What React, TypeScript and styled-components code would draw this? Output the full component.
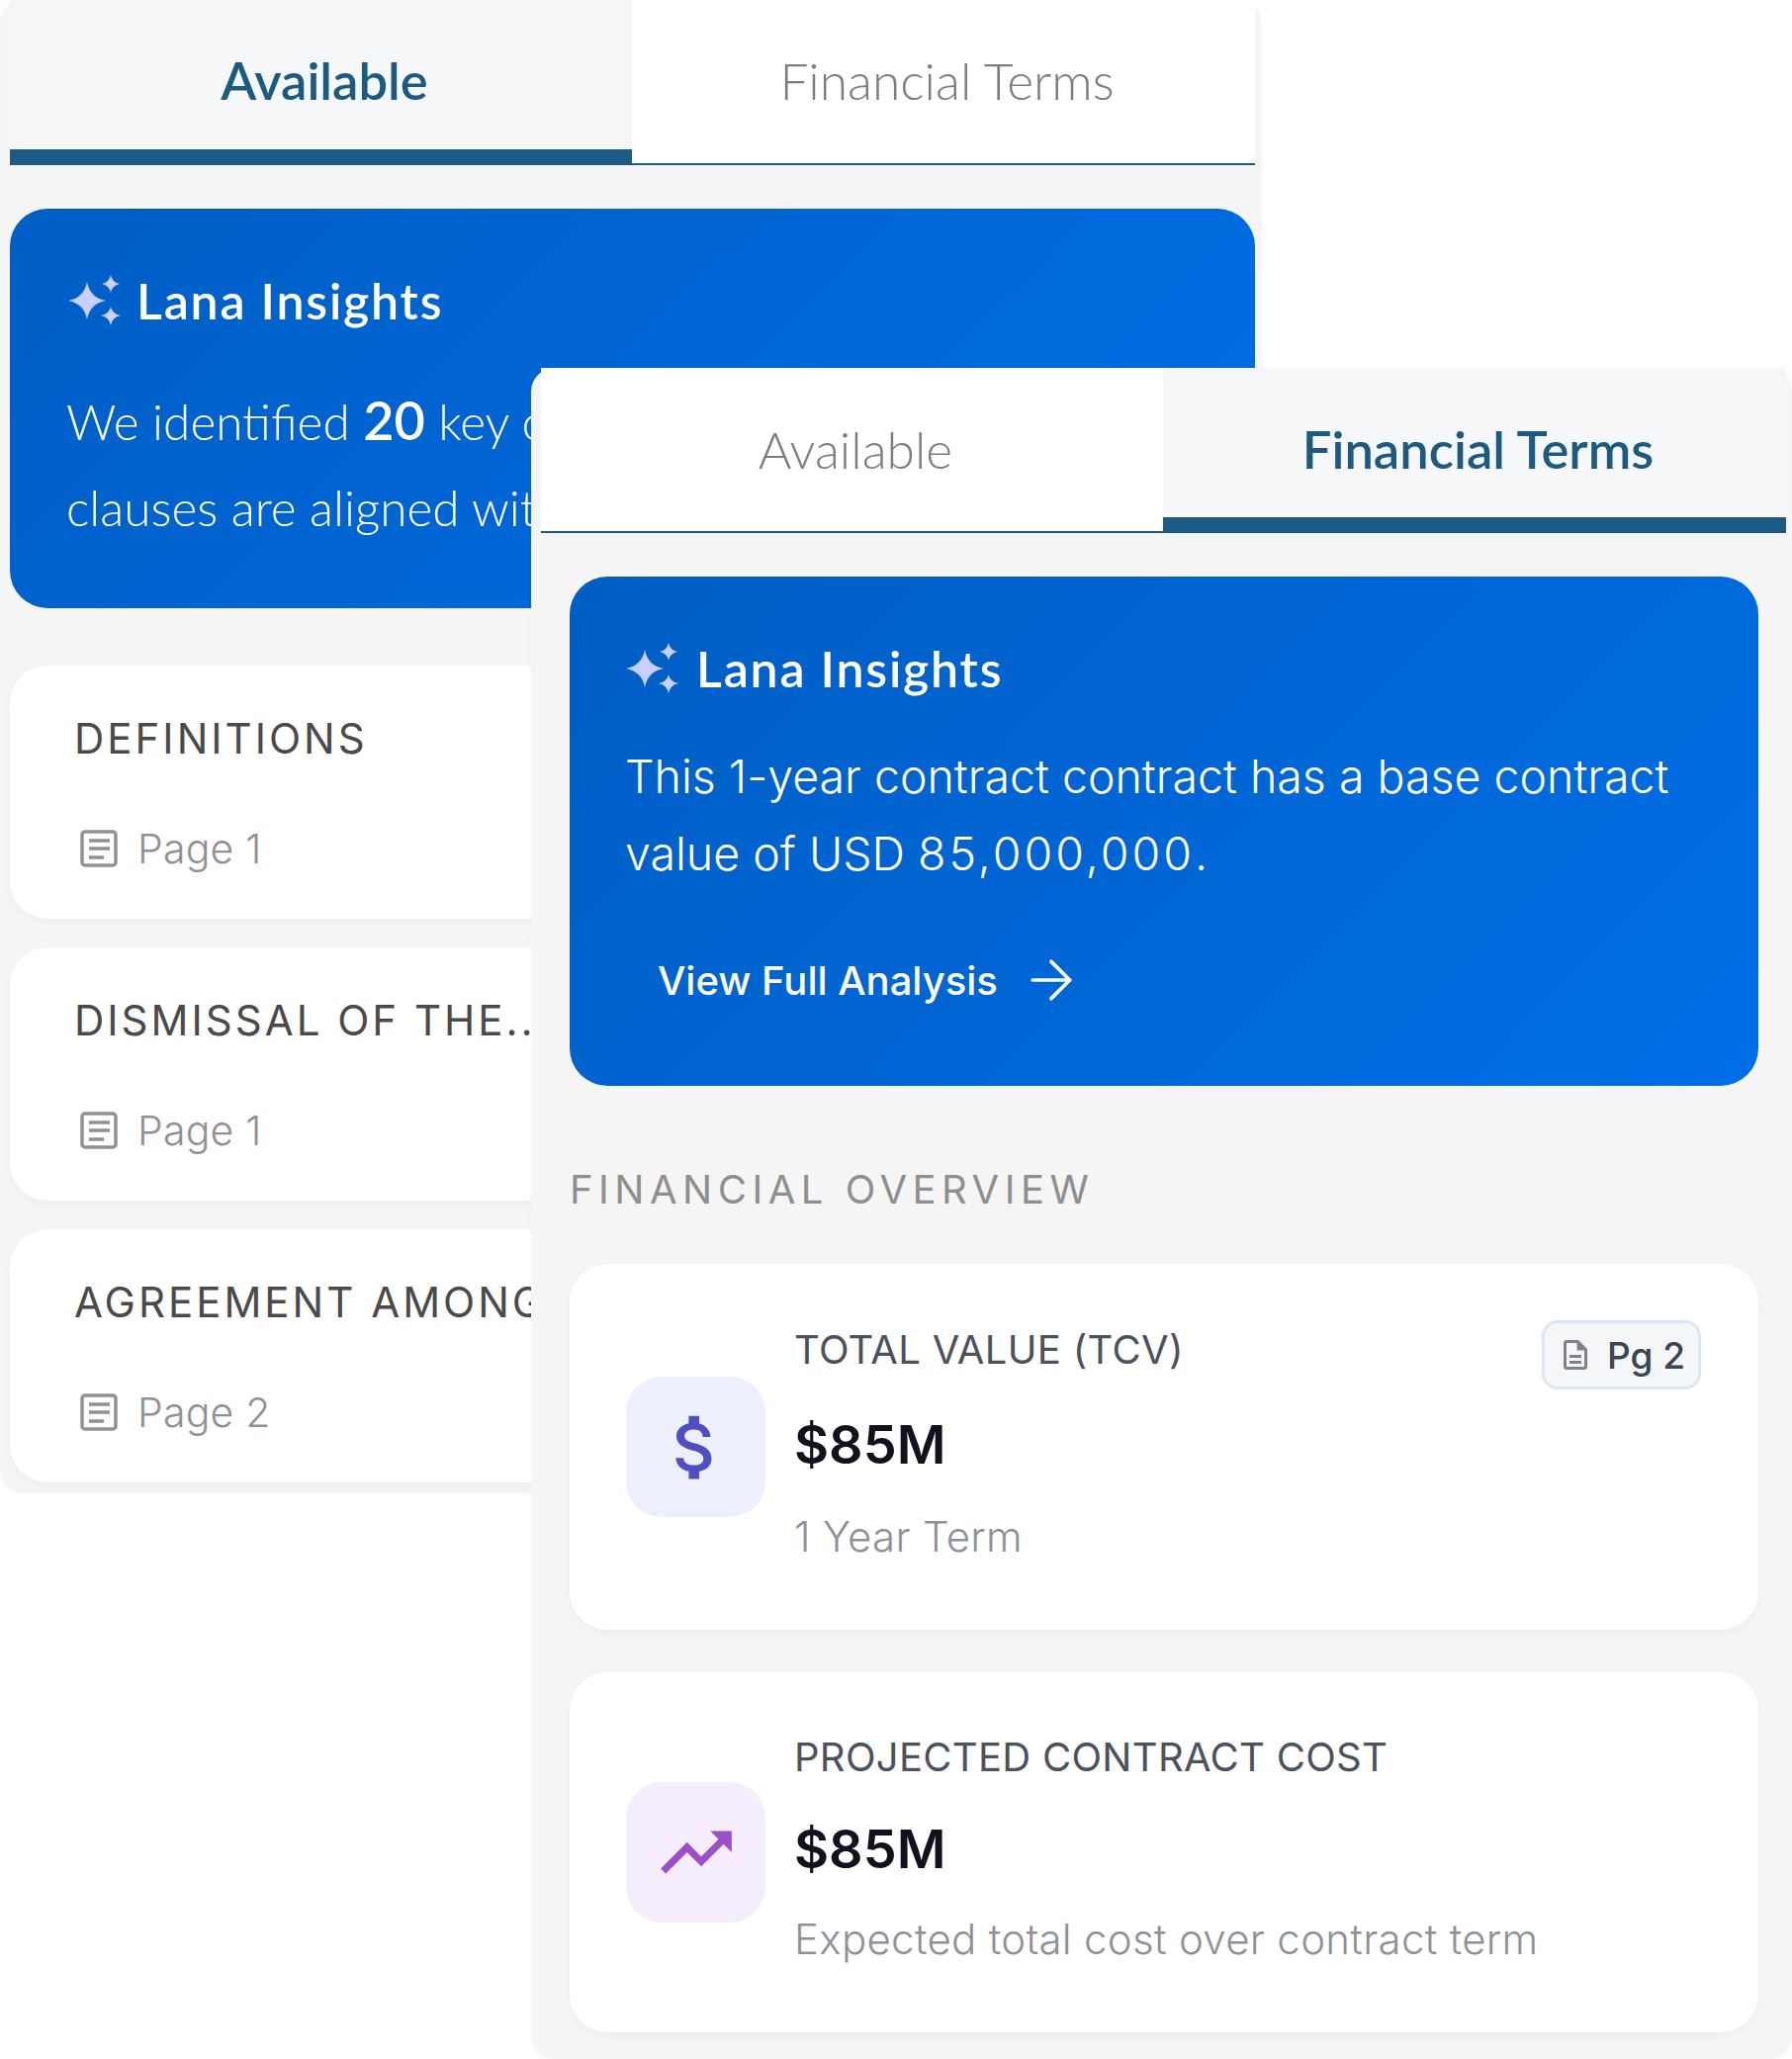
import React from "react";
import styled, { createGlobalStyle } from "styled-components";
import { ArrowRight } from "lucide-react";
import { MdAttachMoney, MdTrendingUp, MdOutlineDescription } from "react-icons/md";

const Global = createGlobalStyle`
  html, body { margin: 0; padding: 0; background: #fff; }
  * { box-sizing: border-box; }
  body { font-family: "Inter", "Liberation Sans", sans-serif; }
`;

const Canvas = styled.div`
  position: relative;
  width: 1812px;
  height: 2082px;
  overflow: hidden;
  background: #fff;
`;

const Panel = styled.section<{ $front?: boolean }>`
  width: 1275px;
  height: ${(p) => (p.$front ? "1710px" : "1510px")};
  background: #f5f5f5;
  border-radius: 24px;
  padding: 0 6px 0 10px;
  box-shadow: 0 0 4px rgba(0, 0, 0, 0.04);
  ${(p) => (p.$front ? `position: absolute; left: 537px; top: 372px;` : ``)}
`;

const Tabs = styled.div<{ $front?: boolean }>`
  display: grid;
  grid-template-columns: 629px 630px;
  height: 167px;
  --tab-lift: ${(p) => (p.$front ? "1px" : "3px")};
`;

const Tab = styled.div<{ $active?: boolean }>`
  display: flex;
  align-items: center;
  justify-content: center;
  height: 167px;
  padding: ${(p) => (p.$active ? "13px" : "0")} 0 var(--tab-lift) 7px;
  font-family: "Lato", sans-serif;
  font-size: ${(p) => (p.$active ? "52.5px" : "51.5px")};
  font-weight: ${(p) => (p.$active ? 600 : 300)};
  color: ${(p) => (p.$active ? "#1c5a80" : "#7d7d7d")};
  background: ${(p) => (p.$active ? "#f6f7f9" : "#fff")};
  border-bottom: ${(p) => (p.$active ? "16px solid #1c5a85" : "2px solid #1c5a85")};
`;

const Body = styled.div<{ $front?: boolean }>`
  display: flex;
  flex-direction: column;
  padding: ${(p) => (p.$front ? "44px 28px 0 29px" : "44px 0 0 0")};
`;

const Insight = styled.div<{ $height: number; $front?: boolean }>`
  height: ${(p) => p.$height}px;
  border-radius: 38px;
  background: linear-gradient(135deg, #005ec4 0%, #006ee6 100%);
  color: #fff;
  padding: ${(p) => (p.$front ? "0 56px" : "0 57px")};
`;

const InsightHead = styled.div<{ $front?: boolean }>`
  display: flex;
  align-items: center;
  gap: ${(p) => (p.$front ? "18px" : "16px")};
  height: 52px;
  margin: 67px 0 0 ${(p) => (p.$front ? "2px" : "3px")};
`;

const InsightTitle = styled.div`
  font-family: "Lato", sans-serif;
  font-size: 50px;
  font-weight: 600;
  letter-spacing: 1.8px;
`;

const BackText = styled.p`
  margin: 53px 0 0;
  font-family: "Lato", sans-serif;
  font-size: 49.5px;
  font-weight: 300;
  line-height: 87px;
  white-space: nowrap;
  strong { font-size: 54px; font-weight: 600; line-height: 1; }
`;

const FrontText = styled.p`
  margin: 44px 0 0;
  font-family: "Inter", sans-serif;
  font-size: 46.5px;
  font-weight: 300;
  line-height: 78px;
  white-space: nowrap;
`;

const WideDigits = styled.span`
  letter-spacing: 3px;
`;

const AnalysisLink = styled.div`
  display: flex;
  align-items: center;
  gap: 22px;
  height: 64px;
  margin: 57px 0 0 33px;
  font-family: "Inter", sans-serif;
  font-size: 40px;
  font-weight: 500;
`;

const Clause = styled.article`
  height: 256px;
  margin-top: 29px;
  border-radius: 38px;
  background: #fff;
  padding: 0 0 0 65px;
  box-shadow: 0 4px 10px rgba(0, 0, 0, 0.03);
  overflow: hidden;
`;

const ClauseList = styled.div`
  margin-top: 29px;
`;

const ClauseTitle = styled.div`
  margin-top: 46px;
  height: 56px;
  line-height: 56px;
  font-family: "Inter", sans-serif;
  font-size: 42px;
  font-weight: 400;
  letter-spacing: 3px;
  color: #4a4a4a;
  white-space: nowrap;
`;

const PageRow = styled.div`
  display: flex;
  align-items: center;
  gap: 20px;
  height: 56px;
  margin: 55px 0 0 6px;
  font-family: "Inter", sans-serif;
  font-size: 41px;
  font-weight: 300;
  letter-spacing: 0.2px;
  color: #8f9196;
`;

const SectionLabel = styled.div`
  height: 56px;
  margin-top: 77px;
  line-height: 56px;
  font-family: "Inter", sans-serif;
  font-size: 40px;
  font-weight: 400;
  letter-spacing: 5.5px;
  color: #8f8f8f;
  white-space: nowrap;
`;

const Metric = styled.article<{ $height: number; $gap: number }>`
  position: relative;
  display: flex;
  gap: 29px;
  height: ${(p) => p.$height}px;
  margin-top: ${(p) => p.$gap}px;
  padding: 0 0 0 57px;
  border-radius: 38px;
  background: #fff;
  box-shadow: 0 4px 10px rgba(0, 0, 0, 0.03);
`;

const MetricIcon = styled.div<{ $bg: string; $fg: string }>`
  flex: none;
  display: flex;
  align-items: center;
  justify-content: center;
  align-self: center;
  width: 141px;
  height: 142px;
  border-radius: 36px;
  background: ${(p) => p.$bg};
  color: ${(p) => p.$fg};
`;

const MetricText = styled.div<{ $top: number }>`
  display: flex;
  flex-direction: column;
  padding-top: ${(p) => p.$top}px;
`;

const MetricLabel = styled.div`
  height: 56px;
  line-height: 56px;
  font-size: 40px;
  font-weight: 400;
  letter-spacing: 0.3px;
  color: #4b525c;
  white-space: nowrap;
`;

const MetricValue = styled.div<{ $gap: number }>`
  height: 76px;
  margin-top: ${(p) => p.$gap}px;
  line-height: 76px;
  font-size: 54px;
  font-weight: 600;
  color: #12121f;
`;

const MetricNote = styled.div<{ $gap: number }>`
  height: 56px;
  margin-top: ${(p) => p.$gap}px;
  line-height: 56px;
  font-size: 42px;
  font-weight: 300;
  letter-spacing: 0.3px;
  color: #8e9298;
  white-space: nowrap;
`;

const PageBadge = styled.div`
  position: absolute;
  top: 57px;
  right: 58px;
  display: flex;
  align-items: center;
  gap: 14px;
  width: 161px;
  height: 70px;
  padding-left: 13px;
  border: 3px solid #d9e7f6;
  border-radius: 16px;
  background: #f5f6f8;
  font-size: 37px;
  font-weight: 500;
  color: #3c4553;
  svg { color: #7f8388; }
`;

const Sparkles = () => (
  <svg width="52" height="52" viewBox="0 0 52 52" fill="#c9d0ff" aria-hidden>
    <path d="M18 7 Q21 23 37 26 Q21 29 18 45 Q15 29 -1 26 Q15 23 18 7Z" />
    <path d="M42 0 Q43.5 7.5 51 9 Q43.5 10.5 42 18 Q40.5 10.5 33 9 Q40.5 7.5 42 0Z" />
    <path d="M42 32 Q43.5 39.5 52 41 Q43.5 42.5 42 51 Q40.5 42.5 32 41 Q40.5 39.5 42 32Z" />
  </svg>
);

const PageIcon = () => (
  <svg width="38" height="38" viewBox="0 0 38 38" fill="none" stroke="#8f9196" strokeWidth="3.5" aria-hidden>
    <rect x="2" y="2" width="34" height="34" rx="3" />
    <path d="M9 11H30M9 19H30M9 28H24" />
  </svg>
);

const clauses = [
  { title: "DEFINITIONS", page: "Page 1" },
  { title: "DISMISSAL OF THE...", page: "Page 1" },
  { title: "AGREEMENT AMONG", page: "Page 2" },
];

export default function App() {
  return (
    <Canvas>
      <Global />
      <Panel>
        <Tabs>
          <Tab $active>Available</Tab>
          <Tab>Financial Terms</Tab>
        </Tabs>
        <Body>
          <Insight $height={404}>
            <InsightHead>
              <Sparkles />
              <InsightTitle>Lana Insights</InsightTitle>
            </InsightHead>
            <BackText>
              We identified <strong>20</strong> key contract
              <br />
              clauses are aligned with
            </BackText>
          </Insight>
          <ClauseList>
            {clauses.map((c) => (
              <Clause key={c.title}>
                <ClauseTitle>{c.title}</ClauseTitle>
                <PageRow>
                  <PageIcon />
                  {c.page}
                </PageRow>
              </Clause>
            ))}
          </ClauseList>
        </Body>
      </Panel>
      <Panel $front>
        <Tabs $front>
          <Tab>Available</Tab>
          <Tab $active>Financial Terms</Tab>
        </Tabs>
        <Body $front>
          <Insight $height={515} $front>
            <InsightHead $front>
              <Sparkles />
              <InsightTitle>Lana Insights</InsightTitle>
            </InsightHead>
            <FrontText>
              This 1-year contract contract has a base contract
              <br />
              value of USD <WideDigits>85,000,000</WideDigits>.
            </FrontText>
            <AnalysisLink>
              View Full Analysis
              <ArrowRight size={64} strokeWidth={1.4} />
            </AnalysisLink>
          </Insight>
          <SectionLabel>FINANCIAL OVERVIEW</SectionLabel>
          <Metric $height={370} $gap={47}>
            <MetricIcon $bg="#eeeffc" $fg="#4f4fc4">
              <MdAttachMoney size={85} />
            </MetricIcon>
            <MetricText $top={59}>
              <MetricLabel>TOTAL VALUE (TCV)</MetricLabel>
              <MetricValue $gap={30}>$85M</MetricValue>
              <MetricNote $gap={27}>1 Year Term</MetricNote>
            </MetricText>
            <PageBadge>
              <MdOutlineDescription size={36} />
              Pg 2
            </PageBadge>
          </Metric>
          <Metric $height={364} $gap={43}>
            <MetricIcon $bg="#f5ecfc" $fg="#9c4fc9">
              <MdTrendingUp size={86} />
            </MetricIcon>
            <MetricText $top={58}>
              <MetricLabel>PROJECTED CONTRACT COST</MetricLabel>
              <MetricValue $gap={27}>$85M</MetricValue>
              <MetricNote $gap={25}>Expected total cost over contract term</MetricNote>
            </MetricText>
          </Metric>
        </Body>
      </Panel>
    </Canvas>
  );
}
